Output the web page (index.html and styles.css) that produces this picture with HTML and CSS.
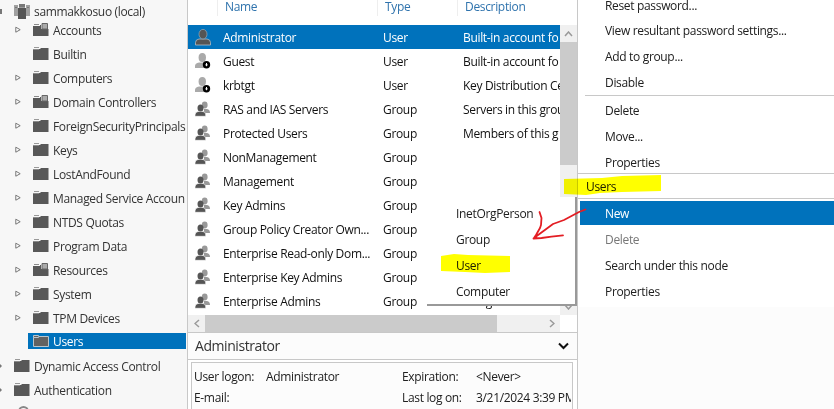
FILE: index.html
```
<!DOCTYPE html>
<html lang="en">
<head>
<meta charset="utf-8">
<title>Active Directory Administrative Center</title>
<link rel="stylesheet" href="styles.css">
</head>
<body>
<svg class="defs" width="0" height="0" aria-hidden="true">
  <symbol id="folder" viewBox="0 0 16 14"><path fill="#999" d="M1 0h5v1H1z"/><path fill="#585858" d="M0 2h7l1-1h7.500v12H0z"/><path fill="#8b8b8b" d="M0 2h6v1H0z"/></symbol>
  <symbol id="unit" viewBox="0 0 16 14"><path fill="#585858" d="M0 3h7V2h1v4h7.500v7H0z"/><path fill="#8b8b8b" d="M1 1h5v1H1z"/><path fill="#aaa" stroke="#666" d="M9 .5h5.500V6H9z"/></symbol>
  <symbol id="open" viewBox="0 0 16 14"><path fill="#626262" stroke="#b8c4cc" d="M.5 3.500V1.500h5v1h10v10H.5z"/><path fill="none" stroke="#b8c4cc" d="M.5 3.500h5l1-1"/></symbol>
  <symbol id="domain" viewBox="0 0 16 15"><path fill="#a0a0a0" d="M0 1h4v11H0zM12 1h4v11h-4z"/><path fill="#777" d="M1 3h2v1H1zM13 3h2v1h-2zM5 0h6v3H5z"/><path fill="#555" d="M4 4h8v11H4z"/><path fill="#999" d="M5 3h6v1H5z"/></symbol>
  <symbol id="arrow" viewBox="0 0 7 8"><path fill="#fff" stroke="#777" d="M.8 1.200v5L5.200 3.700z"/></symbol>
  <symbol id="person" viewBox="0 0 16 17"><path fill="#555" stroke="#b3bec5" stroke-width=".8" d="M.5 16v-2.500Q.5 10.500 4 10h8q3.500.5 3.500 3.500V16z"/><ellipse cx="8" cy="5.200" rx="4" ry="4.800" fill="#555" stroke="#9dabb5" stroke-width=".7"/></symbol>
  <symbol id="disabled" viewBox="0 0 16 17"><path fill="#aaa" d="M0 15v-2q0-3 4-3.500h6q3 .5 3 3.500v2z"/><ellipse cx="7.300" cy="4.500" rx="3.700" ry="4.500" fill="#aaa"/><circle cx="11.500" cy="11.800" r="3.700"/><path fill="#fff" d="M11 10h1v1.500h1l-1.500 2-1.500-2h1z"/></symbol>
  <symbol id="group" viewBox="0 0 16 17"><g fill="#999"><ellipse cx="9.700" cy="4" rx="2.900" ry="3.400"/><path d="M9 8h3q3 .5 3 4H9z"/></g><g fill="#555"><path stroke="#fff" stroke-width=".6" d="M0 15.300v-1.500Q.3 11 3 10.500h5q2.700.4 2.700 3.300v1.500z"/><ellipse cx="5.500" cy="7" rx="3" ry="3.500"/></g></symbol>
</svg>
<main class="window">
  <nav class="tree">
    <div class="node root"><i class="expanded"></i><svg class="ico"><use href="#domain"/></svg><span>sammakkosuo (local)</span></div>
    <div class="node"><svg class="tw"><use href="#arrow"/></svg><svg class="ico"><use href="#unit"/></svg><span>Accounts</span></div>
    <div class="node"><svg class="tw"></svg><svg class="ico"><use href="#folder"/></svg><span>Builtin</span></div>
    <div class="node"><svg class="tw"><use href="#arrow"/></svg><svg class="ico"><use href="#folder"/></svg><span>Computers</span></div>
    <div class="node"><svg class="tw"><use href="#arrow"/></svg><svg class="ico"><use href="#unit"/></svg><span>Domain Controllers</span></div>
    <div class="node"><svg class="tw"><use href="#arrow"/></svg><svg class="ico"><use href="#folder"/></svg><span>ForeignSecurityPrincipals</span></div>
    <div class="node"><svg class="tw"><use href="#arrow"/></svg><svg class="ico"><use href="#folder"/></svg><span>Keys</span></div>
    <div class="node"><svg class="tw"><use href="#arrow"/></svg><svg class="ico"><use href="#folder"/></svg><span>LostAndFound</span></div>
    <div class="node"><svg class="tw"><use href="#arrow"/></svg><svg class="ico"><use href="#folder"/></svg><span>Managed Service Accoun</span></div>
    <div class="node"><svg class="tw"><use href="#arrow"/></svg><svg class="ico"><use href="#folder"/></svg><span>NTDS Quotas</span></div>
    <div class="node"><svg class="tw"><use href="#arrow"/></svg><svg class="ico"><use href="#folder"/></svg><span>Program Data</span></div>
    <div class="node"><svg class="tw"><use href="#arrow"/></svg><svg class="ico"><use href="#unit"/></svg><span>Resources</span></div>
    <div class="node"><svg class="tw"><use href="#arrow"/></svg><svg class="ico"><use href="#folder"/></svg><span>System</span></div>
    <div class="node"><svg class="tw"><use href="#arrow"/></svg><svg class="ico"><use href="#folder"/></svg><span>TPM Devices</span></div>
    <div class="node current"><svg class="ico"><use href="#open"/></svg><span>Users</span></div>
    <div class="node top"><i class="edge"></i><svg class="ico"><use href="#folder"/></svg><span>Dynamic Access Control</span></div>
    <div class="node top"><i class="edge"></i><svg class="ico"><use href="#folder"/></svg><span>Authentication</span></div>
    <div class="search"></div>
  </nav>

  <section class="content">
    <div class="row head"><i></i><b>Name</b><b>Type</b><b>Description</b></div>
    <div class="list">
      <div class="rows">
        <div class="row selected"><svg><use href="#person"/></svg><span>Administrator</span><span>User</span><span>Built-in account fo</span></div>
        <div class="row"><svg><use href="#disabled"/></svg><span>Guest</span><span>User</span><span>Built-in account fo</span></div>
        <div class="row"><svg><use href="#disabled"/></svg><span>krbtgt</span><span>User</span><span>Key Distribution Center</span></div>
        <div class="row"><svg><use href="#group"/></svg><span>RAS and IAS Servers</span><span>Group</span><span>Servers in this group</span></div>
        <div class="row"><svg><use href="#group"/></svg><span>Protected Users</span><span>Group</span><span>Members of this g</span></div>
        <div class="row"><svg><use href="#group"/></svg><span>NonManagement</span><span>Group</span><span></span></div>
        <div class="row"><svg><use href="#group"/></svg><span>Management</span><span>Group</span><span></span></div>
        <div class="row"><svg><use href="#group"/></svg><span>Key Admins</span><span>Group</span><span></span></div>
        <div class="row"><svg><use href="#group"/></svg><span>Group Policy Creator Own...</span><span>Group</span><span></span></div>
        <div class="row"><svg><use href="#group"/></svg><span>Enterprise Read-only Dom...</span><span>Group</span><span></span></div>
        <div class="row"><svg><use href="#group"/></svg><span>Enterprise Key Admins</span><span>Group</span><span></span></div>
        <div class="row"><svg><use href="#group"/></svg><span>Enterprise Admins</span><span>Group</span><span>Desig</span></div>
      </div>
      <div class="vbar"><div class="btn"><svg width="9" height="6"><path d="M1 5l3.500-4L8 5"/></svg></div><div class="thumb"></div><div class="btn down"><svg width="9" height="6"><path d="M1 1l3.500 4L8 1"/></svg></div></div>
    </div>
    <div class="hbar"><div class="btn"><svg width="6" height="9"><path d="M5 1L1 4.500 5 8"/></svg></div><div class="thumb"></div><div class="btn right"><svg width="6" height="9"><path d="M1 1l4 3.500L1 8"/></svg></div></div>
    <h2>Administrator<svg width="11" height="8"><path d="M1 1.500l4.500 4.500L10 1.500"/></svg></h2>
    <dl>
      <dt>User logon:</dt><dd>Administrator</dd><dt>Expiration:</dt><dd>&lt;Never&gt;</dd>
      <dt>E-mail:</dt><dd></dd><dt>Last log on:</dt><dd>3/21/2024 3:39 PM</dd>
    </dl>
  </section>

  <aside class="tasks">
    <div class="menu first"><div>Reset password...</div><div>View resultant password settings...</div><div>Add to group...</div><div>Disable</div></div>
    <div class="menu second"><div>Delete</div><div>Move...</div><div>Properties</div></div>
    <h3>Users</h3>
    <div class="menu third"><div class="active">New</div><div class="off">Delete</div><div>Search under this node</div><div>Properties</div></div>
  </aside>

  <div class="popup"><div>InetOrgPerson</div><div>Group</div><div>User</div><div>Computer</div></div>
  <svg class="marker" viewBox="0 0 834 409">
    <path fill="#ff0" d="M564 179l38-1 20-2 39-1v16l-39 1-22 1-14 2-22-1zM441 256l13-2 14 1 42 1v16l-25 1-20-1-24-1z"/>
  </svg>
  <svg class="pen" viewBox="0 0 834 409"><path d="M585.500 209.500L579 212l-15 8-11 4-19 14 2-3 4-7 1-3 .5-7-2-6M533.500 238.500l8-.5 10-1.300 11.500-1.400"/></svg>
</main>
</body>
</html>
```
FILE: styles.css
```
* { box-sizing: border-box; }
body { margin: 0; overflow: hidden; background: #fff; color: #202020; font: 12px/24px "Open Sans", "Noto Sans", sans-serif; letter-spacing: -.33px; }
.defs { position: absolute; }
.window { position: relative; display: grid; grid-template-columns: 188px 390px 1fr; width: 834px; height: 409px; overflow: hidden; }

.tree { overflow: hidden; background: #f7f7f7; border-right: 1px solid #c8c8c8; color: #333; }
.node { display: flex; align-items: center; height: 24px; padding-left: 15px; white-space: nowrap; }
.node span { padding-top: 1px; }
.tw { width: 7px; height: 8px; margin-right: 11px; flex: none; }
.ico { width: 16px; height: 14px; margin-right: 4px; flex: none; }
.root { height: 18px; padding-left: 0; padding-top: 4px; }
.root .ico { height: 15px; }
.expanded { width: 2px; height: 5px; margin-right: 12px; background: #777; }
.current { height: 16px; margin: 3px 1px 5px 28px; padding-left: 5px; background: #0072bc; color: #fff; line-height: 16px; }
.current span { padding-top: 2px; }
.top { padding-left: 0; }
.edge { margin-right: 12px; border-left: 2px solid #777; border-top: 2px solid transparent; border-bottom: 2px solid transparent; }
.search { width: 11px; height: 11px; margin: 4px 0 0 18px; border: 2px solid #888; border-radius: 50%; }

.content { display: flex; flex-direction: column; min-width: 0; overflow: hidden; border-right: 1px solid #c8c8c8; background: #fff; }
.row { display: grid; grid-template-columns: 35px 160px 80px 1fr; height: 24px; align-items: center; white-space: nowrap; color: #111; }
.row span { height: 24px; line-height: 26px; }
.row svg { width: 16px; height: 17px; margin-left: 7px; }
.head { height: 25px; flex: none; padding-bottom: 9px; grid-template-columns: 29px 160px 80px 1fr; line-height: 13px; color: #2f73ad; }
.head b { height: 16px; padding-left: 7px; border-left: 1px solid #eee; font-weight: 400; line-height: 13px; }
.list { display: flex; height: 290px; flex: none; }
.rows { flex: 1; min-width: 0; overflow: hidden; }
.row.selected { background: #0072bc; color: #fff; }
.vbar { display: flex; flex-direction: column; width: 17px; background: #f0f0f0; }
.btn { display: flex; align-items: center; justify-content: center; width: 17px; height: 17px; background: #f0f0f0; }
.btn path { fill: none; stroke: #999; stroke-width: 1.500; }
.thumb { background: #cbcbcb; }
.vbar .thumb { height: 123px; }
.down { margin-top: auto; height: 16px; }
.hbar { display: flex; width: 372px; height: 17px; flex: none; background: #f0f0f0; }
.hbar .thumb { width: 292px; }
.right { margin-left: auto; }
h2 { display: flex; flex: none; align-items: center; justify-content: space-between; height: 28px; margin: 0; padding: 0 8px 0 7px; border: solid #c8c8c8; border-width: 1px 0; background: #fcfcfc; color: #333; font-size: 14px; font-weight: 400; letter-spacing: -.43px; }
h2 path { fill: none; stroke: #111; stroke-width: 2; }
dl { display: grid; grid-template-columns: 72px 136px 74px 1fr; grid-auto-rows: 21px; height: 60px; flex: none; margin: 2px 4px 0 3px; padding: 3px 1px 0 2px; overflow: hidden; border: 1px solid #c8c8c8; background: #fcfcfc; line-height: 21px; }
dt, dd { margin: 0; white-space: nowrap; }
dd { overflow: hidden; }

.tasks { background: linear-gradient(#fff 307px, #fcfcfc 307px); }
.menu > div { height: 26px; padding-left: 27px; line-height: 26px; white-space: nowrap; }
.first { height: 96px; margin-left: 7px; border-bottom: 1px solid #c8c8c8; }
.first > div { padding-left: 20px; }
.menu.first > div:first-child { height: 17px; line-height: 11px; }
.menu.first > div { line-height: 27px; }
.second { height: 78px; padding-top: 2px; border-bottom: 1px solid #c8c8c8; }
h3 { height: 25px; margin: 0; padding-left: 8px; border-bottom: 1px solid #c8c8c8; font-size: 12px; font-weight: 400; line-height: 26px; }
.third { padding: 2px 0 0 2px; }
.third > div { padding-left: 25px; line-height: 28px; }
.menu .active { height: 24px; margin-bottom: 1px; line-height: 26px; background: #0072bc; color: #fff; }
.menu.third > div:not(.active) { line-height: 28px; }
.menu .off { color: #777; }

.popup { position: absolute; left: 427px; top: 197px; width: 150px; height: 109px; padding: 4px 0 0 29px; border: solid #999; border-width: 0 2px 2px 0; background: #fff; line-height: 26px; }
.marker, .pen { position: absolute; left: 0; top: 0; width: 834px; height: 409px; pointer-events: none; }
.marker { mix-blend-mode: multiply; }
.pen path { fill: none; stroke: #e31e24; stroke-width: 1.800; stroke-linejoin: round; stroke-linecap: round; }
```
